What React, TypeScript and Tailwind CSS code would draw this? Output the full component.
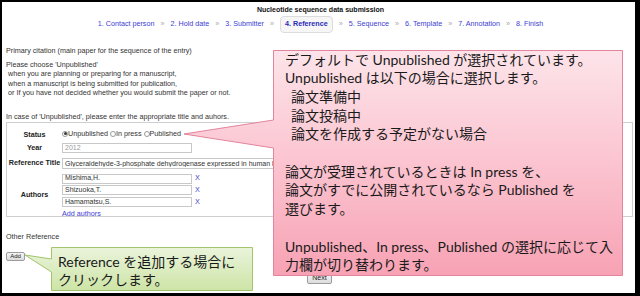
import React from 'react';

const steps = [
  '1. Contact person',
  '2. Hold date',
  '3. Submitter',
  '4. Reference',
  '5. Sequence',
  '6. Template',
  '7. Annotation',
  '8. Finish',
];

const authors = ['Mishima,H.', 'Shizuoka,T.', 'Hamamatsu,S.'];

const Radio = ({ checked, label }: { checked?: boolean; label: string }) => (
  <span className="flex items-center">
    <span className="w-[6px] h-[6px] rounded-full border border-[#9a9a9a] bg-white flex items-center justify-center">
      {checked && <span className="w-[3px] h-[3px] rounded-full bg-[#3a3a3a]" />}
    </span>
    <span>{label}</span>
  </span>
);

export default function App() {
  return (
    <div className="relative w-[640px] h-[296px] overflow-hidden bg-white border-solid border-black border-l-2 border-t-2 border-r-[5px] border-b-[3px] font-['Liberation_Sans',Arial,sans-serif] text-[7.2px] text-[#333]">
      {/* page header */}
      <header className="flex flex-col items-center pl-[4px] pt-[3px]">
        <h1 className="text-[7px] leading-[10px] font-bold text-[#111]">Nucleotide sequence data submission</h1>
        <nav className="mt-[1px] flex items-center h-[17px] text-[7.2px] text-[#3d3dd4]">
          {steps.map((s, i) => (
            <React.Fragment key={s}>
              {i > 0 && <span className="mx-[6px] text-[#aaa]">»</span>}
              {i === 3 ? (
                <span className="h-[17px] px-[4px] flex items-center rounded-[4px] border border-[#dcdcdc] bg-[#f6f6f6] font-bold text-[#2a2ab8]">
                  {s}
                </span>
              ) : (
                <span>{s}</span>
              )}
            </React.Fragment>
          ))}
        </nav>
      </header>

      <main className="pl-[4px] pr-[2px]">
        <p className="mt-[12.5px] leading-[9px]">Primary citation (main paper for the sequence of the entry)</p>
        <div className="mt-[5px] leading-[9.5px]">
          <p>Please choose 'Unpublished'</p>
          <p className="pl-[2px]">when you are planning or preparing for a manuscript,</p>
          <p className="pl-[2px]">when a manuscript is being submitted for publication,</p>
          <p className="pl-[2px]">or If you have not decided whether you would submit the paper or not.</p>
        </div>
        <p className="mt-[14px] leading-[9px]">In case of 'Unpublished', please enter the appropriate title and auhors.</p>

        <section className="mt-[1px] h-[95px] border border-[#cfcfcf] pt-[6px]">
          <div className="grid grid-cols-[55px_1fr] items-center">
            <div className="text-center font-bold leading-[11px] text-[#222]">Status</div>
            <div className="flex items-center gap-[2px] h-[11px]">
              <Radio checked label="Unpublished" />
              <Radio label="In press" />
              <Radio label="Published" />
            </div>
          </div>
          <div className="mt-[3px] grid grid-cols-[55px_1fr] items-center">
            <div className="text-center font-bold text-[#222]">Year</div>
            <input
              readOnly
              value="2012"
              className="h-[10px] w-[130px] border border-[#c8c8c8] px-[2px] text-[7px] text-[#999] outline-none"
            />
          </div>
          <div className="mt-[5px] grid grid-cols-[55px_1fr] items-center">
            <div className="text-center font-bold text-[#222] whitespace-nowrap">Reference Title</div>
            <input
              readOnly
              value="Glyceraldehyde-3-phosphate dehydrogenase expressed in human liver cells"
              className="h-[11px] w-[560px] border border-[#c8c8c8] px-[2px] text-[7px] text-[#333] outline-none"
            />
          </div>
          <div className="mt-[4px] grid grid-cols-[55px_1fr] items-center">
            <div className="text-center font-bold text-[#222]">Authors</div>
            <div className="flex flex-col gap-[1px]">
              {authors.map((a) => (
                <div key={a} className="flex items-center gap-[3px]">
                  <input
                    readOnly
                    value={a}
                    className="h-[10px] w-[130px] border border-[#c8c8c8] px-[2px] text-[7px] text-[#333] outline-none"
                  />
                  <span className="text-[#3d3dd4]">X</span>
                </div>
              ))}
              <span className="leading-[9px] text-[#3d3dd4]">Add authors</span>
            </div>
          </div>
        </section>

        <p className="mt-[15.5px] leading-[9px]">Other Reference</p>
        <button className="mt-[10.5px] block h-[9px] w-[19px] rounded-[2px] border border-[#9c9c9c] bg-gradient-to-b from-[#f6f6f6] to-[#dcdcdc] text-[6px] leading-[7px] text-[#222]">
          Add
        </button>
        <div className="mt-[11px] flex justify-center">
          <button className="h-[12px] w-[25px] rounded-[2px] border border-[#9c9c9c] bg-gradient-to-b from-[#f6f6f6] to-[#dcdcdc] text-[7px] leading-[10px] text-[#222]">
            Next
          </button>
        </div>
      </main>

      {/* callout shapes */}
      <svg
        className="absolute left-0 top-0 pointer-events-none"
        width="633"
        height="291"
        viewBox="2 2 633 291"
      >
        <defs>
          <linearGradient id="pink" x1="0" y1="0" x2="0" y2="1">
            <stop offset="0" stopColor="#fde4ea" />
            <stop offset="0.5" stopColor="#fbc4d0" />
            <stop offset="1" stopColor="#f7a2b4" />
          </linearGradient>
          <linearGradient id="green" x1="0" y1="0" x2="0" y2="1">
            <stop offset="0" stopColor="#eaf4db" />
            <stop offset="1" stopColor="#cde4a6" />
          </linearGradient>
        </defs>
        <path
          d="M273.5,50.5 H622.5 V275.5 H273.5 V148 L184,134 L273.5,120 Z"
          fill="url(#pink)"
          stroke="#e2849b"
          strokeWidth="1"
        />
        <path
          d="M51.5,247.5 H252.5 V290.5 H51.5 V272 L25,255 L51.5,259 Z"
          fill="url(#green)"
          stroke="#a3c46c"
          strokeWidth="1"
        />
      </svg>

      {/* pink callout text */}
      <div className="absolute left-[283px] top-[48.5px] font-['Lato','Noto_Sans_CJK_JP',sans-serif] text-[14px] leading-[18.7px] text-[#1a1a1a] whitespace-nowrap">
        <p>デフォルトで Unpublished が選択されています。</p>
        <p>Unpublished は以下の場合に選択します。</p>
        <p className="pl-[6px]">論文準備中</p>
        <p className="pl-[6px]">論文投稿中</p>
        <p className="pl-[6px]">論文を作成する予定がない場合</p>
        <p className="h-[18.7px]" />
        <p>論文が受理されているときは In press を、</p>
        <p>論文がすでに公開されているなら Published を</p>
        <p>選びます。</p>
        <p className="h-[18.7px]" />
        <p>Unpublished、In press、Published の選択に応じて入</p>
        <p>力欄が切り替わります。</p>
      </div>

      {/* green callout text */}
      <div className="absolute left-[56px] top-[251px] font-['Lato','Noto_Sans_CJK_JP',sans-serif] text-[14px] leading-[18px] text-[#1a1a1a] whitespace-nowrap">
        <p>Reference を追加する場合に</p>
        <p>クリックします。</p>
      </div>
    </div>
  );
}
